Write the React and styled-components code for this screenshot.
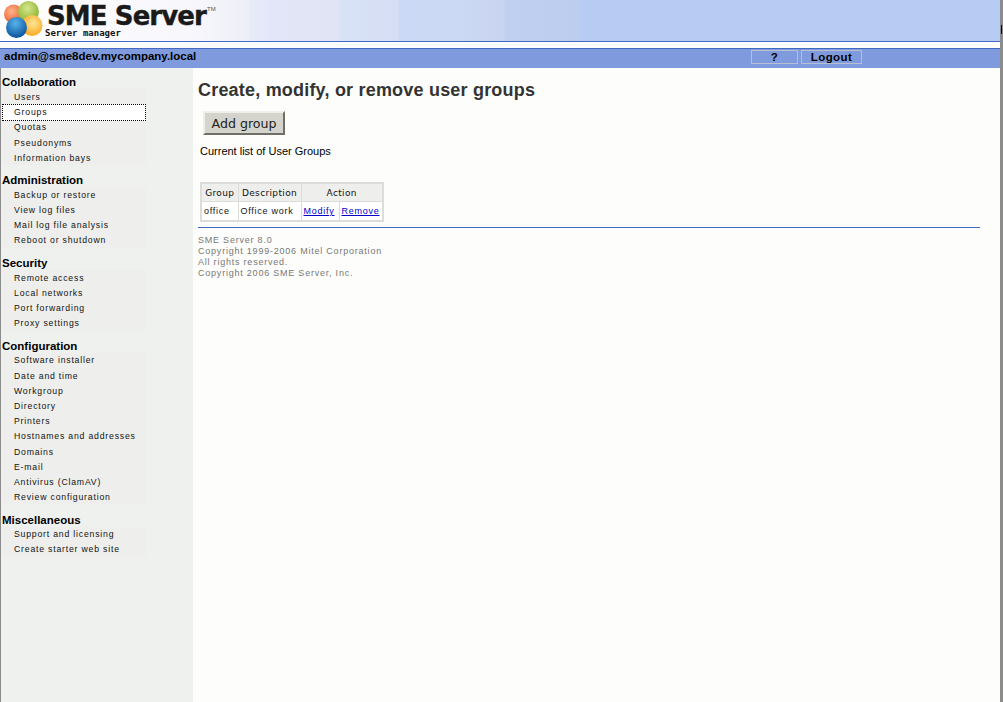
import styled, { createGlobalStyle } from "styled-components";

const GlobalStyle = createGlobalStyle`
  html, body {
    margin: 0;
    padding: 0;
    height: 100%;
    overflow: hidden;
    background: #fff;
    font-family: "DejaVu Sans", sans-serif;
  }
`;

const Page = styled.div`
  width: 1003px;
  height: 702px;
  display: flex;
  overflow: hidden;
  background: #fff;
`;

const Column = styled.div`
  width: 1000px;
  flex: none;
  display: flex;
  flex-direction: column;
`;

const EdgeLine = styled.div`
  position: relative;
  width: 3px;
  flex: none;
  background: #8c8c8c;
  &::before {
    content: "";
    position: absolute;
    left: 1px;
    top: 25px;
    width: 1px;
    height: 9px;
    background: #000;
  }
`;

const Banner = styled.div`
  height: 41px;
  display: flex;
  align-items: flex-start;
  background: linear-gradient(
    90deg,
    #ffffff 0,
    #f6f6fc 200px,
    #eeeef8 249px,
    #e6ebf6 250px,
    #e4e7f9 270px,
    #e2e5f6 297px,
    #e0e3f4 340px,
    #d9e3f7 341px,
    #d5def4 398px,
    #ccd9f6 399px,
    #ccd9f5 450px,
    #c8d4f0 504px,
    #c0d0f1 505px,
    #bdcded 579px,
    #b8ccf3 580px,
    #b8ccf3 100%
  );
`;

const LogoMark = styled.svg`
  width: 43px;
  height: 41px;
  margin-left: 3px;
  flex: none;
`;

const LogoText = styled.div`
  position: relative;
  width: 175px;
  height: 41px;
  margin-left: 1px;
  color: #1a1a1a;
`;

const LogoTitle = styled.div`
  font-family: "DejaVu Sans", sans-serif;
  font-weight: 700;
  font-size: 26px;
  line-height: 23px;
  white-space: nowrap;
  letter-spacing: -0.9px;
  -webkit-text-stroke: 0.4px #1a1a1a;
  margin-top: 5px;
`;

const LogoSub = styled.div`
  font-family: "DejaVu Sans Mono", monospace;
  font-weight: 700;
  font-size: 9px;
  line-height: 10px;
  margin-left: -2px;
  color: #111;
  white-space: nowrap;
`;

const Tm = styled.span`
  position: absolute;
  left: 160px;
  top: 6px;
  font-family: "Liberation Sans", sans-serif;
  font-size: 6px;
  line-height: 7px;
  color: #555;
`;

const Rule = styled.div`
  height: 1px;
  background: #3f69c2;
`;

const Gap = styled.div`
  height: 6px;
  background: #fff;
`;

const StatusBar = styled.div`
  height: 19px;
  display: flex;
  align-items: flex-start;
  background: #7f9bdd;
  color: #000;
  font-family: "Liberation Sans", sans-serif;
  font-weight: 700;
  font-size: 11.5px;
`;

const UserName = styled.div`
  width: 751px;
  padding-left: 4px;
  line-height: 15px;
  box-sizing: border-box;
`;

const BarButton = styled.div`
  width: ${(p) => p.$width}px;
  height: 14px;
  margin: 1px 3px 0 0;
  box-sizing: border-box;
  border: 1px solid #b7bfd0;
  display: flex;
  align-items: center;
  justify-content: center;
  font-size: 11.5px;
  letter-spacing: 0.4px;
`;

const Body = styled.div`
  flex: 1;
  display: flex;
  min-height: 0;
  background: #fdfefb;
`;

const Sidebar = styled.nav`
  width: 193px;
  flex: none;
  box-sizing: border-box;
  border-left: 1px solid #8c8c8c;
  background: #eff1ef;
  padding-top: 7.4px;
`;

const Group = styled.div`
  margin-bottom: 8px;
`;

const GroupTitle = styled.div`
  height: 14px;
  padding-left: 1px;
  font-family: "Liberation Sans", sans-serif;
  font-weight: 700;
  font-size: 11.5px;
  line-height: 14px;
  color: #000;
`;

const Items = styled.div`
  width: 144px;
  margin-left: 1px;
  background: #eeefec;
`;

const Item = styled.div`
  height: 15.2px;
  box-sizing: border-box;
  padding-left: 12px;
  display: flex;
  align-items: center;
  font-family: "Liberation Sans", sans-serif;
  font-size: 8.7px;
  letter-spacing: 0.8px;
  white-space: nowrap;
  color: #111;
  ${(p) =>
    p.$active &&
    `
    background: #fff;
    border: 1px dotted #000;
    padding-left: 11px;
    height: 17.2px;
    margin: -1px 0;
    position: relative;
  `}
`;

const Main = styled.main`
  flex: 1;
  padding: 13px 0 0 5px;
  min-width: 0;
`;

const Content = styled.div`
  width: 782px;
`;

const Title = styled.h1`
  margin: 0;
  height: 19px;
  font-family: "Liberation Sans", sans-serif;
  font-weight: 700;
  font-size: 18px;
  line-height: 19px;
  letter-spacing: 0.2px;
  color: #333;
  white-space: nowrap;
`;

const AddButton = styled.div`
  width: 82px;
  height: 24px;
  margin: 11px 0 0 5px;
  box-sizing: border-box;
  display: flex;
  align-items: center;
  justify-content: center;
  background: #d4d4cc;
  border: 2px solid;
  border-color: #efefe9 #6f6f68 #6f6f68 #efefe9;
  font-size: 12.6px;
  color: #222;
`;

const ListLabel = styled.p`
  margin: 9px 0 0 2px;
  font-family: "Liberation Sans", sans-serif;
  font-size: 11px;
  line-height: 14px;
  color: #000;
`;

const Table = styled.table`
  margin: 24px 0 0 2px;
  border-collapse: collapse;
  border: 2px solid #dcdcd8;
  background: #fff;
  color: #111;
`;

const Th = styled.th`
  height: 18px;
  padding: 1px 0 0;
  width: ${(p) => p.$width}px;
  box-sizing: border-box;
  border: 1px solid #dcdcd8;
  background: #eeefec;
  font-family: "DejaVu Sans", sans-serif;
  font-weight: 400;
  font-size: 9px;
  letter-spacing: 0.35px;
  text-align: center;
`;

const Td = styled.td`
  height: 20px;
  padding: 0 2px;
  width: ${(p) => p.$width}px;
  box-sizing: border-box;
  border: 1px solid #dcdcd8;
  white-space: nowrap;
  font-family: "Liberation Sans", sans-serif;
  font-size: 9px;
  letter-spacing: 0.75px;
`;

const ActionLink = styled.a`
  color: #0000c8;
  text-decoration: underline;
`;

const Divider = styled.hr`
  margin: 5px 0 0 0;
  border: 0;
  height: 1px;
  background: #3f69c2;
`;

const Footer = styled.div`
  margin-top: 7px;
  font-family: "Liberation Sans", sans-serif;
  font-size: 9px;
  line-height: 11px;
  letter-spacing: 0.78px;
  color: #777;
`;

const menu = [
  { title: "Collaboration", items: ["Users", "Groups", "Quotas", "Pseudonyms", "Information bays"] },
  { title: "Administration", items: ["Backup or restore", "View log files", "Mail log file analysis", "Reboot or shutdown"] },
  { title: "Security", items: ["Remote access", "Local networks", "Port forwarding", "Proxy settings"] },
  {
    title: "Configuration",
    items: [
      "Software installer",
      "Date and time",
      "Workgroup",
      "Directory",
      "Printers",
      "Hostnames and addresses",
      "Domains",
      "E-mail",
      "Antivirus (ClamAV)",
      "Review configuration",
    ],
  },
  { title: "Miscellaneous", items: ["Support and licensing", "Create starter web site"] },
];

function Logo() {
  return (
    <LogoMark viewBox="0 0 43 41">
      <defs>
        <radialGradient id="red" cx="0.4" cy="0.35" r="0.7">
          <stop offset="0" stopColor="#ffb48c" />
          <stop offset="1" stopColor="#ea5a28" />
        </radialGradient>
        <radialGradient id="green" cx="0.45" cy="0.35" r="0.7">
          <stop offset="0" stopColor="#d6e68c" />
          <stop offset="1" stopColor="#86b02c" />
        </radialGradient>
        <radialGradient id="orange" cx="0.55" cy="0.4" r="0.7">
          <stop offset="0" stopColor="#ffe596" />
          <stop offset="1" stopColor="#f8a010" />
        </radialGradient>
        <radialGradient id="blue" cx="0.45" cy="0.3" r="0.72">
          <stop offset="0" stopColor="#58b4ea" />
          <stop offset="1" stopColor="#08509c" />
        </radialGradient>
      </defs>
      <circle cx="10.5" cy="14" r="9.5" fill="url(#red)" />
      <circle cx="25.5" cy="11.5" r="10.5" fill="url(#green)" />
      <circle cx="29" cy="25.5" r="10.5" fill="url(#orange)" />
      <circle cx="13.5" cy="27.5" r="10.5" fill="url(#blue)" />
    </LogoMark>
  );
}

export default function App() {
  return (
    <Page>
      <GlobalStyle />
      <Column>
        <Banner>
          <Logo />
          <LogoText>
            <LogoTitle>SME Server</LogoTitle>
            <LogoSub>Server manager</LogoSub>
            <Tm>TM</Tm>
          </LogoText>
        </Banner>
        <Rule />
        <Gap />
        <Rule />
        <StatusBar>
          <UserName>admin@sme8dev.mycompany.local</UserName>
          <BarButton $width={47}>?</BarButton>
          <BarButton $width={61}>Logout</BarButton>
        </StatusBar>
        <Body>
          <Sidebar>
            {menu.map((group) => (
              <Group key={group.title}>
                <GroupTitle>{group.title}</GroupTitle>
                <Items>
                  {group.items.map((item) => (
                    <Item key={item} $active={item === "Groups"}>
                      {item}
                    </Item>
                  ))}
                </Items>
              </Group>
            ))}
          </Sidebar>
          <Main>
            <Content>
              <Title>Create, modify, or remove user groups</Title>
              <AddButton>Add group</AddButton>
              <ListLabel>Current list of User Groups</ListLabel>
              <Table>
                <thead>
                  <tr>
                    <Th $width={37}>Group</Th>
                    <Th $width={63}>Description</Th>
                    <Th colSpan={2}>Action</Th>
                  </tr>
                </thead>
                <tbody>
                  <tr>
                    <Td $width={37}>office</Td>
                    <Td $width={63}>Office work</Td>
                    <Td $width={38}>
                      <ActionLink href="#modify">Modify</ActionLink>
                    </Td>
                    <Td $width={44}>
                      <ActionLink href="#remove">Remove</ActionLink>
                    </Td>
                  </tr>
                </tbody>
              </Table>
              <Divider />
              <Footer>
                SME Server 8.0
                <br />
                Copyright 1999-2006 Mitel Corporation
                <br />
                All rights reserved.
                <br />
                Copyright 2006 SME Server, Inc.
              </Footer>
            </Content>
          </Main>
        </Body>
      </Column>
      <EdgeLine />
    </Page>
  );
}
